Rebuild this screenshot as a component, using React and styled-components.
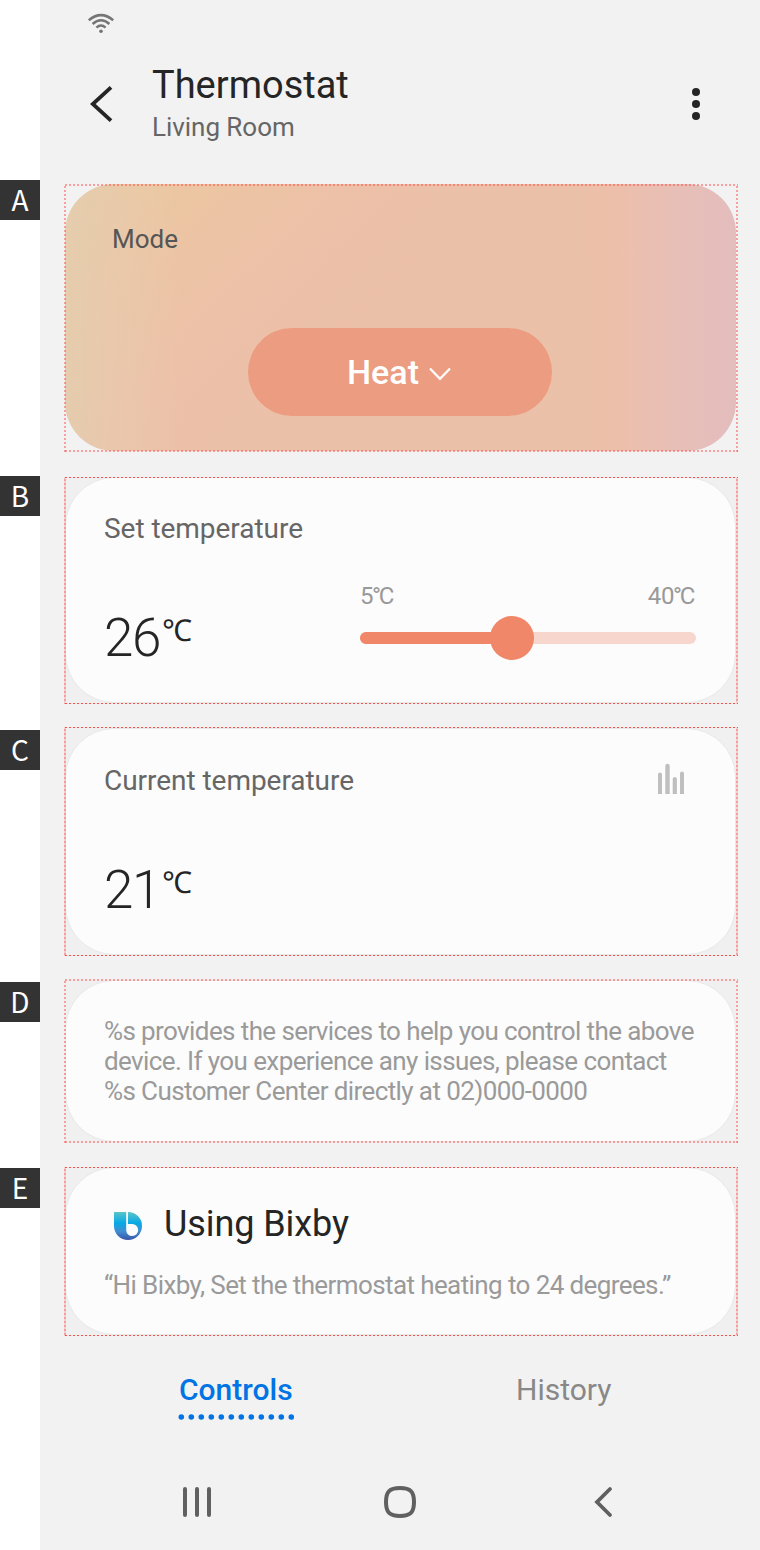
import React from "react";
import styled, { createGlobalStyle, css } from "styled-components";

const GlobalStyle = createGlobalStyle`
  * { box-sizing: border-box; }
  body {
    margin: 0;
    background: #fff;
    font-family: Roboto, "Noto Sans", sans-serif;
    color: #252525;
  }
`;

const Page = styled.div`
  display: flex;
  width: 760px;
  height: 1550px;
  overflow: hidden;
`;

const Gutter = styled.aside`
  flex: 0 0 40px;
  display: flex;
  flex-direction: column;
  background: #fff;
`;

const Marker = styled.div`
  flex: none;
  height: 40px;
  margin-top: ${(p) => p.$gap}px;
  background: #333;
  color: #fff;
  font: 400 28px/38px "Noto Sans CJK KR", sans-serif;
  text-align: center;
`;

const Phone = styled.main`
  flex: 1;
  display: flex;
  flex-direction: column;
  background: #f2f2f2;
`;

const StatusBar = styled.div`
  flex: none;
  height: 48px;
  padding: 12px 0 0 47px;
  svg { display: block; }
`;

const Header = styled.header`
  flex: none;
  display: flex;
  height: 136px;
  padding-left: 50px;
`;

const HeaderIcon = styled.svg`
  display: block;
  flex: none;
  margin-top: 36px;
`;

const Titles = styled.div`
  flex: 1;
  padding: 15px 0 0 38px;
`;

const Title = styled.h1`
  margin: 0 0 5px;
  font-size: 38px;
  font-weight: 400;
  line-height: 44px;
`;

const Subtitle = styled.div`
  font-size: 26px;
  line-height: 30px;
  letter-spacing: -0.04px;
  color: #666;
`;

const thick = "rgba(255, 60, 60, 0.45)";

const thickX = css`repeating-linear-gradient(90deg, ${thick} 0 2px, transparent 2px 4px)`;
const thinX = css`repeating-linear-gradient(90deg, #f55353 0 2px, rgba(230, 230, 230, 0.6) 2px 4px)`;
const thickY = css`repeating-linear-gradient(180deg, transparent 0 2px, ${thick} 2px 4px)`;
const thinY = css`repeating-linear-gradient(180deg, rgba(255, 60, 60, 0.18) 0 2px, ${thick} 2px 4px)`;

const Frame = styled.section`
  position: relative;
  flex: none;
  width: 674px;
  height: ${(p) => p.$height}px;
  margin: 0 0 ${(p) => p.$gap || 0}px 24px;
  padding: ${(p) => p.$inset || "0 2px 1px 1px"};
  background: ${(p) => (p.$plain ? "transparent" : "#f0f0f0")};

  &::after {
    content: "";
    position: absolute;
    inset: 0;
    pointer-events: none;
    background:
      ${(p) => (p.$thin ? thinX : thickX)} 1px 0 / 100% ${(p) => (p.$thin ? 1 : 2)}px no-repeat,
      ${(p) => (p.$thin ? thinX : thickX)} 1px 100% / 100% ${(p) => (p.$thin ? 1 : 2)}px no-repeat,
      ${(p) => (p.$thin ? thinY : thickY)} 0 0 / 2px 100% no-repeat,
      ${(p) => (p.$thin ? thinY : thickY)} 100% 0 / 2px 100% no-repeat;
  }
`;

const Card = styled.div`
  height: 100%;
  border: 1px solid #e8e8e8;
  border-radius: 49px;
  background: #fcfcfc;
  padding: 0 39px 0 38px;
`;

const ModeCard = styled.div`
  display: flex;
  flex-direction: column;
  height: 100%;
  border-radius: 49px;
  padding: 40px 47px 0;
  background:
    linear-gradient(90deg, rgba(237, 191, 169, 0) 77%, #edbfaa 82%, #eabfb2 87%, #e6bfba 94%, #e3bcbd 100%),
    linear-gradient(90deg, rgba(228, 205, 174, 0.9) 0, rgba(231, 203, 176, 0.6) 7%, rgba(237, 194, 168, 0) 17%),
    linear-gradient(135deg, #e8cda2 0, #ecc6a2 13%, #edc1a8 30%, #ebc0a9 50%, #ebc1a9 100%);
`;

const ModeLabel = styled.div`
  font-size: 26px;
  line-height: 30px;
  color: #555;
`;

const ModeButton = styled.button`
  display: flex;
  align-items: center;
  align-self: center;
  gap: 10px;
  width: 304px;
  height: 88px;
  margin: 74px 0 0 -1px;
  padding: 0 0 0 99px;
  border: 0;
  border-radius: 44px;
  background: #ec9c80;
  color: #fff;
  font: 500 34px/40px Roboto, sans-serif;
  svg { margin-top: 3px; }
`;

const CardLabel = styled.div`
  font-size: 28px;
  line-height: 34px;
  letter-spacing: -0.04px;
  color: #666;
`;

const CardHead = styled.div`
  display: flex;
  justify-content: space-between;
  align-items: flex-start;
  height: ${(p) => p.$top + 32}px;
  padding-top: ${(p) => p.$top}px;
  svg { margin-top: -1px; }
`;

const ControlRow = styled.div`
  display: flex;
  justify-content: space-between;
  padding-top: 63px;
`;

const Reading = styled.div`
  display: flex;
  font-size: 53px;
  font-weight: 300;
  line-height: 62px;
  letter-spacing: -1.4px;
`;

const Unit = styled.span`
  margin: 3px 0 0 2px;
  font: 400 30px/40px "Noto Sans", sans-serif;
`;

const SliderBlock = styled.div`
  width: 336px;
  margin-top: -25px;
`;

const Range = styled.div`
  display: flex;
  justify-content: space-between;
  padding-right: 1px;
  font-size: 24px;
  line-height: 28px;
  letter-spacing: -0.4px;
  color: #999;
`;

const Degree = styled.span`
  margin-left: -1px;
  letter-spacing: -2.2px;
`;

const Track = styled.div`
  display: flex;
  align-items: center;
  height: 12px;
  margin-top: 22px;
  border-radius: 6px;
  background: #f6d6cd;
`;

const Fill = styled.div`
  width: 152px;
  height: 12px;
  border-radius: 6px;
  background: #ef8768;
`;

const Thumb = styled.div`
  width: 44px;
  height: 44px;
  margin-left: -22px;
  border-radius: 50%;
  background: #ef8768;
`;

const Note = styled.p`
  margin: 0;
  padding-top: ${(p) => p.$top}px;
  font-size: 26px;
  line-height: 30px;
  letter-spacing: -0.6px;
  white-space: nowrap;
  color: #9a9a9a;
`;

const BixbyHead = styled.div`
  display: flex;
  align-items: flex-start;
  padding: 35px 0 0 10px;
  svg { margin-top: 9px; }
`;

const BixbyTitle = styled.h2`
  margin: 0 0 0 22px;
  font-size: 36px;
  font-weight: 400;
  line-height: 42px;
  letter-spacing: -0.08px;
`;

const Tabs = styled.nav`
  flex: none;
  display: flex;
  height: 84px;
  padding: 36px 0 0 138px;
`;

const Tab = styled.div`
  width: 116px;
  font-size: 30px;
  line-height: 36px;
  font-weight: ${(p) => (p.$active ? 500 : 400)};
  color: ${(p) => (p.$active ? "#0074e4" : "#888")};
  & + & { margin-left: 221px; }
  svg { display: block; margin-top: 6px; }
`;

const TabText = styled.span`
  display: block;
  padding-left: 1px;
`;

const NavBar = styled.div`
  flex: none;
  display: flex;
  gap: 172px;
  align-items: center;
  height: 164px;
  padding-left: 142px;
`;

const Wifi = () => (
  <svg width="28" height="22" viewBox="0 0 28 22" fill="none" stroke="#757575" strokeWidth="2.5">
    <path d="M1.8 8.2Q14-2 26.2 8.2" />
    <path d="M5.6 12Q14 4.400 22.4 12" />
    <path d="M9.4 15.6Q14 11.4 18.6 15.6" />
    <circle cx="14" cy="19.2" r="1.8" fill="#757575" stroke="none" />
  </svg>
);

const BackIcon = () => (
  <HeaderIcon width="24" height="40" viewBox="0 0 24 40" fill="none">
    <path d="M21 3.3L2.8 20L21 36.7" stroke="#252525" strokeWidth="3.8" />
  </HeaderIcon>
);

const MoreIcon = () => (
  <HeaderIcon width="88" height="40" viewBox="0 0 88 40" fill="#252525">
    <circle cx="24" cy="8" r="4" />
    <circle cx="24" cy="20" r="4" />
    <circle cx="24" cy="32" r="4" />
  </HeaderIcon>
);

const ChevronDown = () => (
  <svg width="22" height="14" viewBox="0 0 22 14" fill="none">
    <path d="M1 1.4L11 11.8L21 1.4" stroke="#fff" strokeWidth="2.2" />
  </svg>
);

const ChartIcon = () => (
  <svg width="40" height="32" viewBox="0 0 40 32" fill="#bfbfbf">
    <path d="M2 31V11.5a2 2 0 0 1 4 0V31zM9.3 31V3a2.2 2.2 0 0 1 4.4 0V31zM16.7 31V16a2.1 2.1 0 0 1 4.2 0V31zM24 31V10.5a2 2 0 0 1 4 0V31z" />
  </svg>
);

const BixbyLogo = () => (
  <svg width="28" height="28" viewBox="0 0 28 28">
    <defs>
      <linearGradient id="bixby" x1="0" y1="0" x2="0" y2="1">
        <stop offset="0" stopColor="#5cc4c8" />
        <stop offset="0.4" stopColor="#06a9e6" />
        <stop offset="0.68" stopColor="#3f8fd2" />
        <stop offset="1" stopColor="#3a55a8" />
      </linearGradient>
    </defs>
    <path
      fill="url(#bixby)"
      fillRule="evenodd"
      d="M0 0H12.2V18.3A6 6 0 1 0 18.2 12.1H14V0A14 14 0 1 1 0 14Z"
    />
  </svg>
);

const TabDots = () => (
  <svg width="116" height="6" viewBox="0 0 116 6" fill="#0074e4">
    {Array.from({ length: 12 }, (_, i) => (
      <circle key={i} cx={3.3 + i * 10} cy="3" r="2.8" />
    ))}
  </svg>
);

const RecentsIcon = () => (
  <svg width="30" height="32" viewBox="0 0 30 32" stroke="#606060" strokeWidth="4" strokeLinecap="round">
    <path d="M3 3V29M15 3V29M27 3V29" />
  </svg>
);

const HomeIcon = () => (
  <svg width="32" height="32" viewBox="0 0 32 32" fill="none" stroke="#606060" strokeWidth="4">
    <path d="M16 2C26.5 2 30 5.5 30 16S26.5 30 16 30S2 26.5 2 16S5.5 2 16 2Z" />
  </svg>
);

const NavBackIcon = () => (
  <svg width="26" height="32" viewBox="0 0 26 32" fill="none" stroke="#606060" strokeWidth="3.8" strokeLinecap="round">
    <path d="M22 3L9 16L22 29" />
  </svg>
);

const markers = [
  ["A", 180],
  ["B", 256],
  ["C", 214],
  ["D", 212],
  ["E", 146],
];

export default function App() {
  return (
    <Page>
      <GlobalStyle />
      <Gutter>
        {markers.map(([name, gap]) => (
          <Marker key={name} $gap={gap}>{name}</Marker>
        ))}
      </Gutter>
      <Phone>
        <StatusBar><Wifi /></StatusBar>
        <Header>
          <BackIcon />
          <Titles>
            <Title>Thermostat</Title>
            <Subtitle>Living Room</Subtitle>
          </Titles>
          <MoreIcon />
        </Header>

        <Frame $height={268} $gap={25} $plain>
          <ModeCard>
            <ModeLabel>Mode</ModeLabel>
            <ModeButton>Heat<ChevronDown /></ModeButton>
          </ModeCard>
        </Frame>

        <Frame $height={227} $gap={23} $thin>
          <Card>
            <CardHead $top={34}><CardLabel>Set temperature</CardLabel></CardHead>
            <ControlRow>
              <Reading>26<Unit>℃</Unit></Reading>
              <SliderBlock>
                <Range>
                  <span>5<Degree>°</Degree>C</span>
                  <span>40<Degree>°</Degree>C</span>
                </Range>
                <Track><Fill /><Thumb /></Track>
              </SliderBlock>
            </ControlRow>
          </Card>
        </Frame>

        <Frame $height={229} $gap={23} $thin $inset="1px 2px 1px 1px">
          <Card>
            <CardHead $top={35}>
              <CardLabel>Current temperature</CardLabel>
              <ChartIcon />
            </CardHead>
            <ControlRow>
              <Reading>21<Unit>℃</Unit></Reading>
            </ControlRow>
          </Card>
        </Frame>

        <Frame $height={164} $gap={24} $inset="1px 2px 1px 1px">
          <Card>
            <Note $top={35}>
              %s provides the services to help you control the above<br />
              device. If you experience any issues, please contact<br />
              %s Customer Center directly at 02)000-0000
            </Note>
          </Card>
        </Frame>

        <Frame $height={169} $thin>
          <Card>
            <BixbyHead>
              <BixbyLogo />
              <BixbyTitle>Using Bixby</BixbyTitle>
            </BixbyHead>
            <Note $top={25}>“Hi Bixby, Set the thermostat heating to 24 degrees.”</Note>
          </Card>
        </Frame>

        <Tabs>
          <Tab $active><TabText>Controls</TabText><TabDots /></Tab>
          <Tab><TabText>History</TabText></Tab>
        </Tabs>
        <NavBar>
          <RecentsIcon />
          <HomeIcon />
          <NavBackIcon />
        </NavBar>
      </Phone>
    </Page>
  );
}
